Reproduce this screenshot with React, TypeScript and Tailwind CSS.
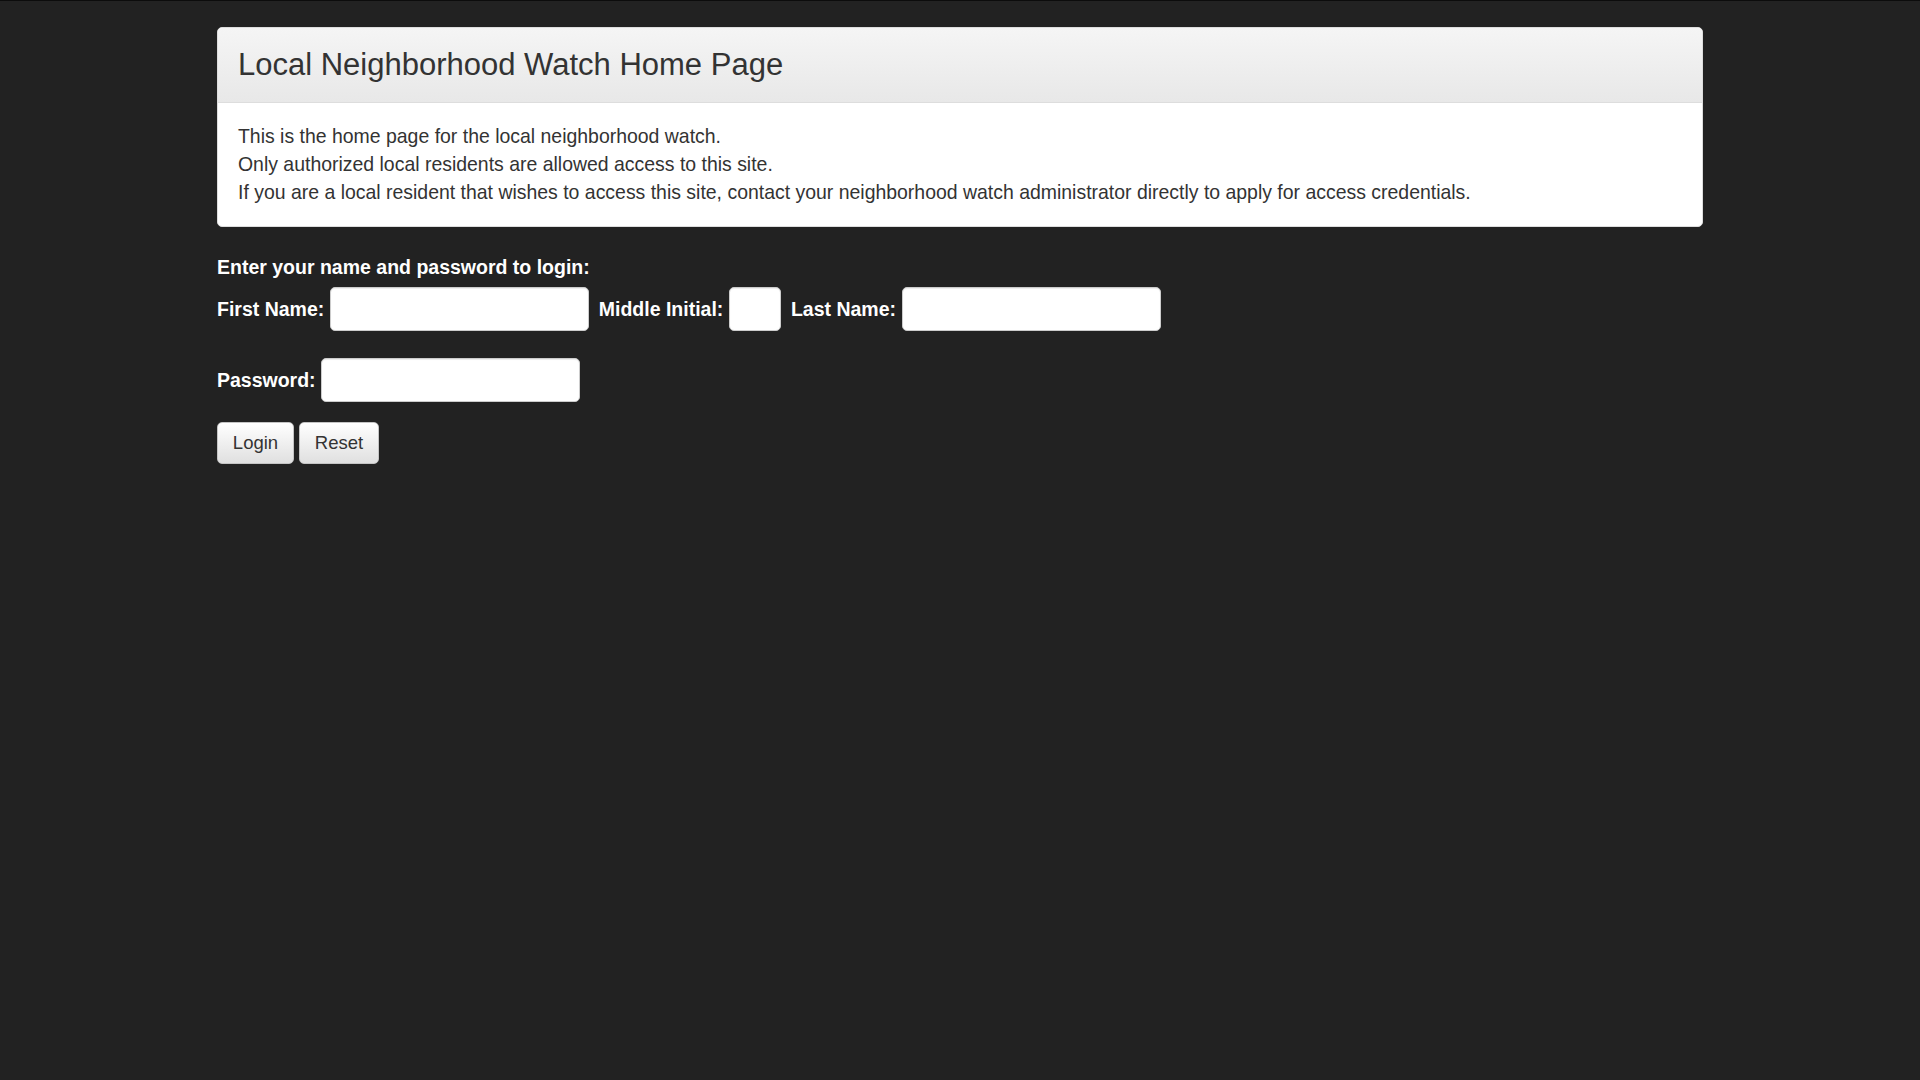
import { useState } from "react";

const font = "font-['Liberation_Sans',Arial,sans-serif]";

function Field({
  label,
  width,
  value,
  onChange,
  type = "text",
  last = false,
}: {
  label: string;
  width: string;
  value: string;
  onChange: (v: string) => void;
  type?: string;
  last?: boolean;
}) {
  return (
    <div className={`flex items-center ${last ? "" : "mr-[10px]"}`}>
      <label className="mr-[5.5px] text-[19.5px] font-bold leading-[28px] text-white">{label}</label>
      <input
        type={type}
        value={value}
        onChange={(e) => onChange(e.target.value)}
        className={`${width} h-[44px] rounded-[5px] border border-[#cccccc] bg-white px-3 text-[18px] text-[#555] shadow-[inset_0_1px_1px_rgba(0,0,0,0.075)] outline-none`}
      />
    </div>
  );
}

export default function App() {
  const [first, setFirst] = useState("");
  const [middle, setMiddle] = useState("");
  const [last, setLast] = useState("");
  const [password, setPassword] = useState("");

  function handleReset() {
    setFirst("");
    setMiddle("");
    setLast("");
    setPassword("");
  }

  return (
    <div className={`min-h-screen border-t border-[#0c0c0c] bg-[#222222] ${font}`}>
      <div className="mx-auto w-[1486px] pt-[26px]">
        <div className="overflow-hidden rounded-[5px] border border-[#dddddd] bg-white">
          <header className="border-b border-[#dddddd] bg-gradient-to-b from-[#f5f5f5] to-[#e8e8e8] px-[20px] pt-[20px] pb-[20px]">
            <h3 className="text-[31px] leading-[34px] font-normal text-[#333333]">
              Local Neighborhood Watch Home Page
            </h3>
          </header>
          <div className="px-[20px] pt-[19px] pb-[20px] text-[19.45px] leading-[28px] text-[#333333]">
            <p>This is the home page for the local neighborhood watch.</p>
            <p>Only authorized local residents are allowed access to this site.</p>
            <p>
              If you are a local resident that wishes to access this site, contact your neighborhood watch
              administrator directly to apply for access credentials.
            </p>
          </div>
        </div>

        <form className="mt-[26px]" onSubmit={(e) => e.preventDefault()}>
          <p className="text-[19.5px] font-bold leading-[28px] text-white">Enter your name and password to login:</p>

          <div className="mt-[6px] flex items-center">
            <Field label="First Name:" width="w-[259px]" value={first} onChange={setFirst} />
            <Field label="Middle Initial:" width="w-[52px]" value={middle} onChange={setMiddle} />
            <Field label="Last Name:" width="w-[259px]" value={last} onChange={setLast} last />
          </div>

          <div className="mt-[27px] flex items-center">
            <Field label="Password:" width="w-[259px]" type="password" value={password} onChange={setPassword} last />
          </div>

          <div className="mt-[20px] flex gap-[5px]">
            <button
              type="submit"
              className="h-[42px] w-[77px] rounded-[5px] border border-[#c4c4c4] bg-gradient-to-b from-white to-[#e0e0e0] text-[18.5px] text-[#333333] shadow-[inset_0_1px_0_rgba(255,255,255,0.15)]"
            >
              Login
            </button>
            <button
              type="button"
              onClick={handleReset}
              className="h-[42px] w-[80px] rounded-[5px] border border-[#c4c4c4] bg-gradient-to-b from-white to-[#e0e0e0] text-[18.5px] text-[#333333] shadow-[inset_0_1px_0_rgba(255,255,255,0.15)]"
            >
              Reset
            </button>
          </div>
        </form>
      </div>
    </div>
  );
}
